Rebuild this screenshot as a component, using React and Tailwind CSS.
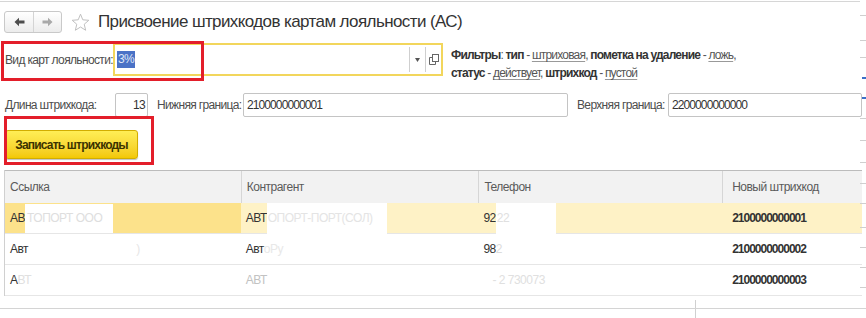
export default function App() {
  const F = "font-['Liberation_Sans',Arial,sans-serif]";
  return (
    <div className={`relative w-[866px] h-[318px] overflow-hidden bg-white ${F} text-[#4a4a4a] whitespace-nowrap`}>
      {/* top frame line */}
      <div className="h-[2px] w-[860px] border-b border-[#d6d6d6]" />

      {/* header */}
      <div className="mt-[9px] flex h-[22px] items-center">
        <div className="ml-[4px] flex h-[22px] w-[58px] rounded-[3px] border border-[#c9c9c9] bg-gradient-to-b from-white to-[#ececec]">
          <div className="flex w-[29px] items-center justify-center border-r border-[#d4d4d4]">
            <svg width="11" height="10" viewBox="0 0 11 10">
              <path d="M0.5 5 L5 0.8 L5 3.4 L10.5 3.4 L10.5 6.6 L5 6.6 L5 9.2 Z" fill="#4d4d4d" />
            </svg>
          </div>
          <div className="flex flex-1 items-center justify-center">
            <svg width="11" height="10" viewBox="0 0 11 10">
              <path d="M10.5 5 L6 0.8 L6 3.4 L0.5 3.4 L0.5 6.6 L6 6.6 L6 9.2 Z" fill="#a9a9a9" />
            </svg>
          </div>
        </div>
        <svg className="ml-[9px]" width="19" height="19" viewBox="0 0 24 24">
          <polygon
            points="12,1.5 14.9,8.6 22.5,9.2 16.7,14.2 18.5,21.8 12,17.7 5.5,21.8 7.3,14.2 1.5,9.2 9.1,8.6"
            fill="none"
            stroke="#bdbdbd"
            strokeWidth="1.2"
            strokeLinejoin="round"
          />
        </svg>
        <div className="ml-[8px] text-[17px] leading-[22px] tracking-[-0.6px] text-[#333333]">
          Присвоение штрихкодов картам лояльности (АС)
        </div>
      </div>

      {/* loyalty card type + filters */}
      <div className="mt-[10px] flex h-[33px] items-start text-[12px] tracking-[-0.65px]">
        <div className="flex h-[33px] w-[113px] items-center pl-[5px] text-[#4d4d4d]">Вид карт лояльности:</div>
        <div className="flex h-[33px] w-[330px] items-center border-2 border-[#f2d65c] bg-white">
          <div className="flex flex-1 items-center pl-[2px]">
            <span className="bg-[#4b72c6] px-[1px] leading-[17px] text-[#dfe6f6]">3%</span>
          </div>
          <div className="h-[25px] w-px bg-[#cfcfcf]" />
          <div className="flex w-[15px] items-center justify-center">
            <svg width="5" height="4" viewBox="0 0 5 4">
              <path d="M0 0 L5 0 L2.5 4 Z" fill="#555" />
            </svg>
          </div>
          <div className="h-[25px] w-px bg-[#cfcfcf]" />
          <div className="flex w-[15px] items-center justify-center">
            <svg width="10" height="11" viewBox="0 0 10 11">
              <rect x="3.5" y="0.5" width="6" height="7" fill="white" stroke="#666" />
              <path d="M3.5 3.5 L0.5 3.5 L0.5 10.5 L6.5 10.5 L6.5 7.5" fill="none" stroke="#666" />
            </svg>
          </div>
        </div>
        <div className="ml-[8px] pt-[3px] text-[12px] leading-[18px] tracking-[-0.8px] text-[#555]">
          <div>
            <b className="text-[#333]">Фильтры</b>: <b className="text-[#333]">тип</b> -{" "}
            <span className="underline decoration-[#999] underline-offset-2">штриховая</span>,{" "}
            <b className="text-[#333]">пометка на удаление</b> -{" "}
            <span className="underline decoration-[#999] underline-offset-2">ложь</span>,
          </div>
          <div>
            <b className="text-[#333]">статус</b> -{" "}
            <span className="underline decoration-[#999] underline-offset-2">действует</span>,{" "}
            <b className="text-[#333]">штрихкод</b> -{" "}
            <span className="underline decoration-[#999] underline-offset-2">пустой</span>
          </div>
        </div>
      </div>

      {/* barcode length & bounds */}
      <div className="mt-[17px] flex h-[24px] items-center text-[12px] tracking-[-0.65px] text-[#4d4d4d]">
        <div className="w-[115px] pl-[5px]">Длина штрихкода:</div>
        <div className="flex h-[24px] w-[33px] items-center justify-end rounded-[2px] border border-[#c4c4c4] pr-[2px] text-[#333]">13</div>
        <div className="ml-[9px] w-[86px]">Нижняя граница:</div>
        <div className="flex h-[24px] w-[325px] items-center rounded-[2px] border border-[#c4c4c4] pl-[3px] tracking-[-0.9px] text-[#333]">2100000000001</div>
        <div className="ml-[9px] w-[91px]">Верхняя граница:</div>
        <div className="flex h-[24px] w-[194px] items-center rounded-[2px] border border-[#c4c4c4] pl-[3px] tracking-[-0.9px] text-[#333]">2200000000000</div>
      </div>

      {/* button */}
      <div className="mt-[13px] ml-[5px] flex h-[29px] w-[133px] items-center justify-center rounded-[3px] border border-[#d2ad00] bg-gradient-to-b from-[#ffee55] to-[#f3c800] text-[12px] font-bold tracking-[-0.8px] text-[#3b3300] shadow-[0_1px_1px_rgba(0,0,0,0.25)]">
        Записать штрихкоды
      </div>

      {/* table */}
      <div className="mt-[11px] ml-[4px] w-[858px] border-l border-[#d0d0d0] text-[12px] tracking-[-0.5px]">
        <div className="flex h-[33px] border-t border-[#bcbcbc] bg-[#f2f2f2] text-[#5a5a5a]">
          <div className="flex w-[236px] items-center pl-[5px]">Ссылка</div>
          <div className="flex w-[238px] items-center border-l border-[#d6d6d6] pl-[5px]">Контрагент</div>
          <div className="flex w-[244px] items-center border-l border-[#d6d6d6] pl-[5px]">Телефон</div>
          <div className="flex w-[140px] items-center border-l border-[#d6d6d6] pl-[9px]">Новый штрихкод</div>
        </div>

        {/* row 1 */}
        <div className="flex h-[31px] border-b border-[#e6e6e6] text-[#333]">
          <div className="flex w-[236px] items-center bg-[#fce28b] pl-[1px]">
            <span className="pl-[4px]">АВ</span>
            <span className="flex h-[29px] w-[88px] items-center bg-white pl-[2px] text-[#dedede]">ТОПОРТ ООО</span>
          </div>
          <div className="flex w-[238px] items-center bg-[#fef2c6] pl-[5px]">
            <span>АВТ</span>
            <span className="flex h-[31px] w-[120px] items-center bg-white pl-[1px] text-[#e4e4e4]">ОПОРТ-ПОРТ(СОЛ)</span>
          </div>
          <div className="flex w-[244px] items-center bg-[#fef2c6] pl-[5px]">
            <span>92</span>
            <span className="flex h-[31px] w-[60px] items-center bg-white pl-[1px] text-[#e0e0e0]">22</span>
          </div>
          <div className="flex w-[140px] items-center bg-[#fef2c6] pl-[10px] font-bold tracking-[-1px]">2100000000001</div>
        </div>

        {/* row 2 */}
        <div className="flex h-[31px] border-b border-[#e6e6e6] text-[#333]">
          <div className="flex w-[236px] items-center pl-[5px]">
            <span>Авт</span>
            <span className="ml-[108px] text-[#e6e6e6]">)</span>
          </div>
          <div className="flex w-[238px] items-center pl-[5px]">
            <span>Авт</span>
            <span className="text-[#e8e8e8]">оРу</span>
          </div>
          <div className="flex w-[244px] items-center pl-[5px]">
            <span>98</span>
            <span className="text-[#dcdcdc]">2</span>
          </div>
          <div className="flex w-[140px] items-center pl-[10px] font-bold tracking-[-1px]">2100000000002</div>
        </div>

        {/* row 3 */}
        <div className="flex h-[31px] border-b border-[#e6e6e6] text-[#333]">
          <div className="flex w-[236px] items-center pl-[5px]">
            <span>А</span>
            <span className="text-[#e0e0e0]">ВТ</span>
          </div>
          <div className="flex w-[238px] items-center pl-[5px] text-[#c2c2c2]">
            <span>АВТ</span>
          </div>
          <div className="flex w-[244px] items-center pl-[14px] text-[#e0e0e0]">
            <span>- 2 730073</span>
          </div>
          <div className="flex w-[140px] items-center pl-[10px] font-bold tracking-[-1px]">2100000000003</div>
        </div>
      </div>

      {/* bottom */}
      <div className="mt-[4px] ml-[695px] h-[8px] w-px bg-[#d0d0d0]" />
      <div className="h-px w-full bg-[#d4d4d4]" />
      <div className="ml-[695px] h-[12px] w-px bg-[#d0d0d0]" />

      {/* red annotation boxes */}
      <div className="absolute left-[1px] top-[41px] h-[40px] w-[203px] border-[3px] border-[#e31e2a]" />
      <div className="absolute left-[4px] top-[116px] h-[49px] w-[150px] border-[3px] border-[#e31e2a]" />

      {/* right edge ticks */}
      <div className="absolute right-0 top-0 h-[318px] w-[6px]">
        <div className="absolute left-0 top-[15px] h-px w-[6px] bg-[#cfcfcf]" />
        <div className="absolute left-0 top-[40px] h-px w-[6px] bg-[#cfcfcf]" />
        <div className="absolute left-0 top-[57px] h-px w-[6px] bg-[#cfcfcf]" />
        <div className="absolute left-[2px] top-[77px] h-[2px] w-[4px] bg-[#3c6fc9]" />
        <div className="absolute left-[2px] top-[97px] h-[2px] w-[4px] bg-[#3c6fc9]" />
        <div className="absolute left-0 top-[118px] h-px w-[6px] bg-[#cfcfcf]" />
        <div className="absolute left-0 top-[140px] h-px w-[6px] bg-[#cfcfcf]" />
        <div className="absolute left-0 top-[162px] h-px w-[6px] bg-[#cfcfcf]" />
        <div className="absolute left-0 top-[183px] h-px w-[6px] bg-[#cfcfcf]" />
        <div className="absolute left-0 top-[203px] h-px w-[6px] bg-[#cfcfcf]" />
        <div className="absolute left-0 top-[227px] h-px w-[6px] bg-[#cfcfcf]" />
        <div className="absolute left-0 top-[247px] h-px w-[6px] bg-[#cfcfcf]" />
        <div className="absolute left-0 top-[267px] h-px w-[6px] bg-[#cfcfcf]" />
        <div className="absolute left-0 top-[287px] h-px w-[6px] bg-[#cfcfcf]" />
      </div>
    </div>
  );
}
